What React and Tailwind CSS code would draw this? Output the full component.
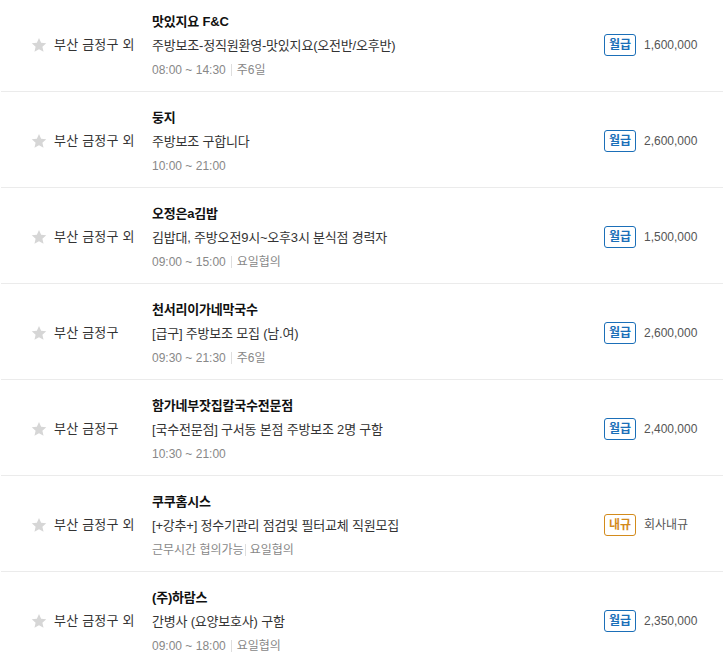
import React from "react";

const items = [
  { loc: "부산 금정구 외", title: "맛있지요 F&C", body: "주방보조-정직원환영-맛있지요(오전반/오후반)", time: "08:00 ~ 14:30", day: "주6일", badge: "월급", pay: "1,600,000" },
  { loc: "부산 금정구 외", title: "둥지", body: "주방보조 구합니다", time: "10:00 ~ 21:00", day: null, badge: "월급", pay: "2,600,000" },
  { loc: "부산 금정구 외", title: "오정은a김밥", body: "김밥대, 주방오전9시~오후3시 분식점 경력자", time: "09:00 ~ 15:00", day: "요일협의", badge: "월급", pay: "1,500,000" },
  { loc: "부산 금정구", title: "천서리이가네막국수", body: "[급구] 주방보조 모집 (남.여)", time: "09:30 ~ 21:30", day: "주6일", badge: "월급", pay: "2,600,000" },
  { loc: "부산 금정구", title: "함가네부잣집칼국수전문점", body: "[국수전문점] 구서동 본점 주방보조 2명 구함", time: "10:30 ~ 21:00", day: null, badge: "월급", pay: "2,400,000" },
  { loc: "부산 금정구 외", title: "쿠쿠홈시스", body: "[+강추+] 정수기관리 점검및 필터교체 직원모집", time: "근무시간 협의가능", day: "요일협의", badge: "내규", pay: "회사내규", orange: true, tight: true },
  { loc: "부산 금정구 외", title: "(주)하람스", body: "간병사 (요양보호사) 구함", time: "09:00 ~ 18:00", day: "요일협의", badge: "월급", pay: "2,350,000" },
];

function Star() {
  return (
    <svg width="16" height="16" viewBox="0 0 24 24" className="shrink-0">
      <path d="M12 1.5l3.2 7.1 7.7.8-5.8 5.2 1.7 7.6L12 18.3l-6.8 3.9 1.7-7.6L1.1 9.4l7.7-.8z" fill="#d6d6d6" />
    </svg>
  );
}

export default function App() {
  return (
    <div className="w-[723px] h-[667px] overflow-hidden bg-white" style={{ fontFamily: '"Liberation Sans", "Noto Sans CJK KR", sans-serif' }}>
      <div className="-mt-[4px]">
        {items.map((it, i) => (
          <div key={i} className="ml-[1px] h-[96px] border-b border-[#ebebeb] flex items-center pl-[30px]">
            <div className="pt-[2px]"><Star /></div>
            <div className="ml-[7px] w-[98px] pt-[2px] text-[13px] text-[#333] tracking-[0.2px] whitespace-nowrap">{it.loc}</div>
            <div className="flex-1 flex flex-col pt-[5px]">
              <div className="h-[24px] leading-[24px] text-[13px] font-bold text-[#111] tracking-[-0.2px]">{it.title}</div>
              <div className="h-[24px] leading-[24px] text-[13px] text-[#333] tracking-[-0.2px]">{it.body}</div>
              <div className="h-[24px] leading-[24px] text-[12px] text-[#888] flex items-center">
                <span>{it.time}</span>
                {it.day && (
                  <>
                    <span className={`inline-block w-[1px] h-[12px] bg-[#dedede] ${it.tight ? "ml-[1px] mr-[4px]" : "mx-[5px]"}`} />
                    <span>{it.day}</span>
                  </>
                )}
              </div>
            </div>
            <div className="w-[119px] flex items-center pt-[2px]">
              <span className={`h-[22px] w-[32px] flex items-center justify-center rounded-[3px] border text-[12px] font-bold ${it.orange ? "border-[#d38b1c] text-[#d38b1c]" : "border-[#1b6fb8] text-[#1b6fb8]"}`}>{it.badge}</span>
              <span className="ml-[8px] text-[12px] text-[#555]">{it.pay}</span>
            </div>
          </div>
        ))}
      </div>
    </div>
  );
}
